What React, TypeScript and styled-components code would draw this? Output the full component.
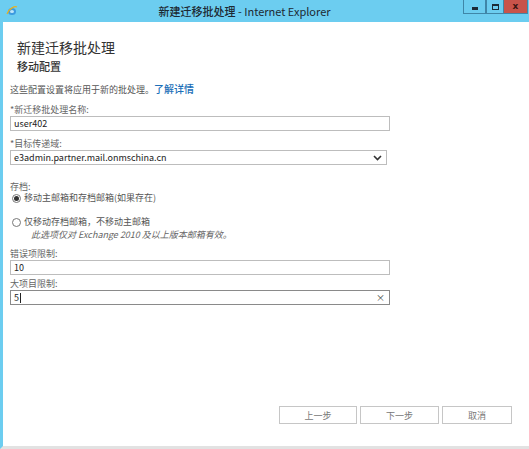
import styled, { createGlobalStyle } from 'styled-components';

const Global = createGlobalStyle`
  html, body { margin: 0; padding: 0; background: #fff; }
  body { font-family: "Noto Sans CJK SC", "Noto Sans", sans-serif; color: #444; }
`;

const Window = styled.div`
  width: 529px;
  height: 449px;
  box-sizing: border-box;
  background: #fff;
  border-left: 3px solid #6ccdf0;
  border-bottom: 3px solid #e2e2e2;
  display: flex;
  flex-direction: column;
  overflow: hidden;
`;

const TitleBar = styled.div`
  height: 22px;
  background: #6ccdf0;
  margin-left: -3px;
  display: flex;
  align-items: center;
`;

const IeLogo = styled.svg`
  margin-left: 6px;
  width: 12px;
  height: 12px;
`;

const TitleText = styled.div`
  flex: 1;
  text-align: center;
  font-size: 11px;
  color: #1d2a33;
  padding-left: 8px;
  b { font-weight: 500; }
`;

const Controls = styled.div`
  display: flex;
  align-self: flex-start;
  margin-right: 1px;
`;

const Ctrl = styled.div<{ $close?: boolean; $w: number }>`
  width: ${p => p.$w}px;
  height: 14px;
  box-sizing: border-box;
  border: 1px solid #3f86a8;
  border-top: none;
  border-left: ${p => (p.$close ? 'none' : '1px solid #3f86a8')};
  background: ${p => (p.$close ? '#c8534a' : '#6ccdf0')};
  display: flex;
  align-items: center;
  justify-content: center;
`;

const MinGlyph = styled.span`
  width: 6px;
  height: 3px;
  margin-top: 3px;
  background: #1b2a36;
`;

const MaxGlyph = styled.span`
  width: 7px;
  height: 6px;
  box-sizing: border-box;
  border: 1px solid #1b2a36;
  border-top-width: 2px;
`;

const CloseGlyph = styled.span`
  font-family: "DejaVu Sans", sans-serif;
  font-size: 9px;
  font-weight: bold;
  color: #3a1512;
  line-height: 1;
`;

const Body = styled.div`
  flex: 1;
  display: flex;
  flex-direction: column;
  padding: 15px 0 0 7px;
`;

const Heading = styled.h1`
  margin: 0 0 0 7px;
  font-size: 14px;
  font-weight: 400;
  color: #333;
  line-height: 20px;
`;

const SubHeading = styled.h2`
  margin: 1px 0 0 7px;
  font-size: 11px;
  font-weight: 500;
  color: #333;
  line-height: 16px;
`;

const Intro = styled.p`
  margin: 8px 0 0;
  font-size: 9px;
  line-height: 14px;
  color: #555;
  a { color: #1b6fb8; font-weight: 500; text-decoration: none; font-size: 10px; }
`;

const Label = styled.div<{ $top: number }>`
  margin-top: ${p => p.$top}px;
  font-size: 9px;
  line-height: 11px;
  color: #666;
`;

const Field = styled.div<{ $w: number; $dark?: boolean }>`
  width: ${p => p.$w}px;
  height: 15px;
  box-sizing: border-box;
  border: 1px solid ${p => (p.$dark ? '#8a8a8a' : '#bdbdbd')};
  margin-top: 1px;
  display: flex;
  align-items: center;
  justify-content: space-between;
  padding: 0 4px 0 3px;
  font-size: 9px;
  color: #222;
`;

const Value = styled.span`
  display: flex;
  align-items: center;
`;

const Caret = styled.span`
  width: 1px;
  height: 10px;
  background: #222;
  margin-left: 1px;
`;

const Clear = styled.span`
  font-size: 9px;
  color: #444;
`;

const RadioRow = styled.label<{ $top: number }>`
  margin-top: ${p => p.$top}px;
  display: flex;
  align-items: center;
  gap: 3px;
  font-size: 9px;
  line-height: 12px;
  color: #555;
`;

const Radio = styled.span<{ $on?: boolean }>`
  width: 9px;
  height: 9px;
  margin-left: 2px;
  box-sizing: border-box;
  border-radius: 50%;
  border: 1px solid #777;
  display: flex;
  align-items: center;
  justify-content: center;
  &::after {
    content: '';
    width: 5px;
    height: 5px;
    border-radius: 50%;
    background: ${p => (p.$on ? '#333' : 'transparent')};
  }
`;

const Note = styled.div`
  margin: 1px 0 0 21px;
  font-size: 9px;
  font-style: italic;
  color: #666;
  line-height: 12px;
`;

const Footer = styled.div`
  margin-top: auto;
  display: flex;
  justify-content: flex-end;
  gap: 3px;
  padding: 0 17px 22px 0;
`;

const Button = styled.div<{ $w: number }>`
  width: ${p => p.$w}px;
  height: 18px;
  box-sizing: border-box;
  border: 1px solid #c6c6c6;
  display: flex;
  align-items: center;
  justify-content: center;
  font-size: 9px;
  color: #777;
`;

export default function App() {
  return (
    <>
      <Global />
      <Window>
        <TitleBar>
          <IeLogo viewBox="0 0 12 12">
            <ellipse cx="6" cy="6.5" rx="4" ry="3.6" fill="#3d9be0" />
            <ellipse cx="6" cy="6.5" rx="2" ry="1.6" fill="#bfe6fa" />
            <path d="M1 9 C3 3 9 1 11 2" stroke="#e8b020" strokeWidth="1.2" fill="none" />
          </IeLogo>
          <TitleText>
            <b>新建迁移批处理</b> - Internet Explorer
          </TitleText>
          <Controls>
            <Ctrl $w={23}><MinGlyph /></Ctrl>
            <Ctrl $w={18}><MaxGlyph /></Ctrl>
            <Ctrl $w={24} $close><CloseGlyph>x</CloseGlyph></Ctrl>
          </Controls>
        </TitleBar>
        <Body>
          <Heading>新建迁移批处理</Heading>
          <SubHeading>移动配置</SubHeading>
          <Intro>
            这些配置设置将应用于新的批处理。<a href="#">了解详情</a>
          </Intro>
          <Label $top={7}>*新迁移批处理名称:</Label>
          <Field $w={380}>user402</Field>
          <Label $top={7}>*目标传递域:</Label>
          <Field $w={377}>
            e3admin.partner.mail.onmschina.cn
            <svg width="9" height="6" viewBox="0 0 9 6">
              <path d="M1 1 L4.5 4.5 L8 1" stroke="#333" strokeWidth="1.6" fill="none" />
            </svg>
          </Field>
          <Label $top={16}>存档:</Label>
          <RadioRow $top={0}>
            <Radio $on />
            移动主邮箱和存档邮箱(如果存在)
          </RadioRow>
          <RadioRow $top={12}>
            <Radio />
            仅移动存档邮箱，不移动主邮箱
          </RadioRow>
          <Note>此选项仅对 Exchange 2010 及以上版本邮箱有效。</Note>
          <Label $top={7}>错误项限制:</Label>
          <Field $w={380}>10</Field>
          <Label $top={3}>大项目限制:</Label>
          <Field $w={380} $dark>
            <Value>5<Caret /></Value>
            <Clear>×</Clear>
          </Field>
          <Footer>
            <Button $w={78}>上一步</Button>
            <Button $w={79}>下一步</Button>
            <Button $w={70}>取消</Button>
          </Footer>
        </Body>
      </Window>
    </>
  );
}
